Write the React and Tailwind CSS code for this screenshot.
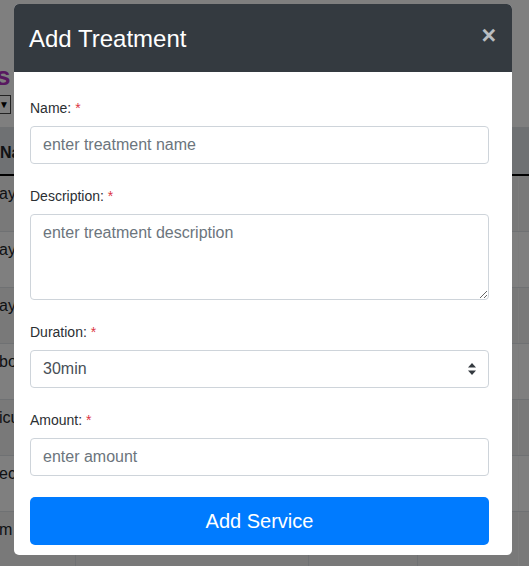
import React from "react";

function Label({ children }) {
  return (
    <label className="block text-[14px] leading-[21px] text-[#2b2f33] mb-[7px]">
      {children} <span className="text-[#dc3545]">*</span>
    </label>
  );
}

export default function App() {
  const rows = ["ay", "ay", "ay", "boo", "icu", "ecu", "m"];
  return (
    <div
      className="relative w-[529px] h-[566px] overflow-hidden bg-white"
      style={{ fontFamily: '"Liberation Sans", Arial, sans-serif' }}
    >
      {/* background page */}
      <div className="flex flex-col">
        <div className="h-[64px]" />
        <div className="text-[26px] leading-[24px] font-bold text-[#b030c0] -ml-[4px]">s</div>
        <div className="mt-[7px] flex">
          <div className="w-[11px] h-[19px] border border-l-0 border-[#444] flex items-center justify-end pr-[1px] text-[10px] text-black">
            ▼
          </div>
        </div>
        <div className="mt-[13px] flex flex-col">
          <div className="h-[49px] bg-[#dee2e6] border-b-2 border-black flex items-center pt-[4px] text-[16px] font-bold text-[#212529]">
            Na
          </div>
          {rows.map((r, i) => (
            <div
              key={i}
              className={
                "relative h-[56px] border-b border-[#dee2e6] pt-[8px] text-[16px] leading-[20px] text-[#212529] " +
                (i % 2 === 0 ? "bg-[#f2f2f2]" : "bg-white")
              }
            >
              <span className="-ml-[1px]">{r}</span>
              <div className="absolute left-[75px] top-0 bottom-0 w-px bg-[#dee2e6]" />
              <div className="absolute left-[308px] top-0 bottom-0 w-px bg-[#dee2e6]" />
              <div className="absolute left-[417px] top-0 bottom-0 w-px bg-[#dee2e6]" />
              <div className="absolute left-[518px] top-0 bottom-0 w-px bg-[#fafafa]" />
            </div>
          ))}
        </div>
      </div>

      {/* overlay */}
      <div className="absolute inset-0 bg-black/50" />

      {/* modal */}
      <div className="absolute left-[14px] top-[4px] w-[498px] rounded-[5px] bg-white overflow-hidden">
        <div className="h-[68px] bg-[#343a40] flex items-center justify-between pl-[15px] pr-[16px]">
          <h4 className="text-[24px] leading-[30px] text-white font-normal pt-[1px]">Add Treatment</h4>
          <span className="text-[25px] leading-none font-bold text-[#b9bdc1] -mt-[6px]">×</span>
        </div>
        <div className="pt-[26px] pl-[16px] pr-[23px] pb-[10px] flex flex-col">
          <Label>Name:</Label>
          <input
            className="h-[38px] w-full rounded-[4px] border border-[#ced4da] px-[12px] text-[16px] text-[#495057] placeholder:text-[#6c757d] outline-none mb-[22px]"
            placeholder="enter treatment name"
          />
          <Label>Description:</Label>
          <textarea
            className="h-[86px] w-full rounded-[4px] border border-[#ced4da] px-[12px] py-[6px] text-[16px] leading-[24px] text-[#495057] placeholder:text-[#6c757d] outline-none mb-[22px] block"
            placeholder="enter treatment description"
          />
          <Label>Duration:</Label>
          <div className="relative h-[38px] w-full rounded-[4px] border border-[#ced4da] px-[12px] flex items-center text-[16px] text-[#495057] mb-[22px]">
            <span>30min</span>
            <svg className="absolute right-[12px] top-[12px]" width="8" height="12" viewBox="0 0 8 12">
              <path d="M4 0 L8 4.5 L0 4.5 Z" fill="#343a40" />
              <path d="M4 12 L8 7.5 L0 7.5 Z" fill="#343a40" />
            </svg>
          </div>
          <Label>Amount:</Label>
          <input
            className="h-[38px] w-full rounded-[4px] border border-[#ced4da] px-[12px] text-[16px] text-[#495057] placeholder:text-[#6c757d] outline-none mb-[21px]"
            placeholder="enter amount"
          />
          <button className="h-[48px] w-full rounded-[5px] bg-[#007bff] text-white text-[20px] leading-[30px]">
            Add Service
          </button>
        </div>
      </div>
    </div>
  );
}
